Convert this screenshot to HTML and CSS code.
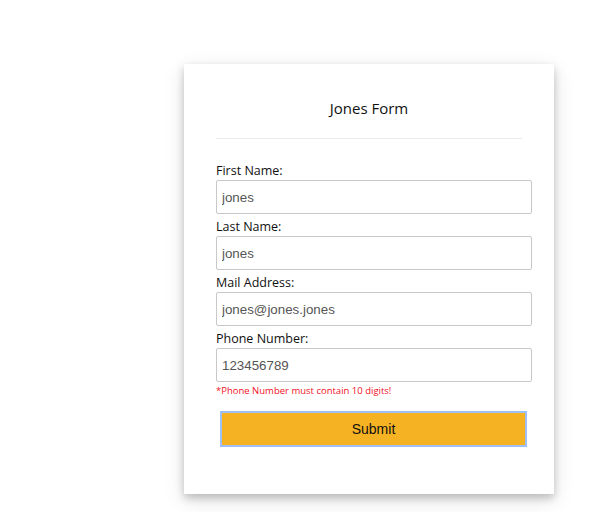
FILE: index.html
```
<!DOCTYPE html>
<html>
<head>
<meta charset="utf-8">
<link rel="stylesheet" href="styles.css">
</head>
<body>
<div class="card">
  <h2 class="title">Jones Form</h2>
  <hr class="rule">
  <form class="form">
    <div class="field">
      <label class="label">First Name:</label>
      <input class="input" type="text" value="jones">
    </div>
    <div class="field">
      <label class="label">Last Name:</label>
      <input class="input" type="text" value="jones">
    </div>
    <div class="field">
      <label class="label">Mail Address:</label>
      <input class="input" type="text" value="jones@jones.jones">
    </div>
    <div class="field">
      <label class="label">Phone Number:</label>
      <input class="input" type="text" value="123456789">
    </div>
    <div class="error">*Phone Number must contain 10 digits!</div>
    <button class="submit" type="button">Submit</button>
  </form>
</div>
</body>
</html>
```

FILE: styles.css
```
html, body {
  margin: 0;
  padding: 0;
  background: #ffffff;
}
body {
  font-family: "Open Sans", "Noto Sans", sans-serif;
  padding-bottom: 18px;
}
.card {
  box-sizing: border-box;
  width: 370px;
  height: 430px;
  margin: 64px 0 0 184px;
  padding: 0 32px;
  background: #fff;
  box-shadow: 0 4px 8px 0 rgba(0,0,0,0.2), 0 6px 20px 0 rgba(0,0,0,0.12);
  display: flow-root;
}
.title {
  margin: 33px 0 0;
  font-size: 15px;
  font-weight: 400;
  line-height: 22px;
  text-align: center;
  color: #111;
}
.rule {
  margin: 19px 0 0;
  border: 0;
  border-top: 1px solid #eaeaea;
  height: 0;
}
.form {
  margin: 23px 0 0;
}
.field {
  display: flex;
  flex-direction: column;
  margin-bottom: 4px;
}
.label {
  font-size: 12.5px;
  line-height: 18px;
  color: #111;
}
.input {
  box-sizing: border-box;
  width: 316px;
  height: 34px;
  margin: 0;
  padding: 0 5px;
  border: 1px solid #c8c8c8;
  border-radius: 2px;
  font-family: "Liberation Sans", Arial, sans-serif;
  font-size: 13.33px;
  color: #555;
  background: #fff;
}
.error {
  margin-top: -1px;
  font-size: 9.5px;
  line-height: 12px;
  color: #f0101e;
}
.submit {
  display: block;
  box-sizing: border-box;
  width: 307px;
  height: 36px;
  margin: 14px 0 0 4px;
  background: #f5b324;
  border: 2px solid #9ec0f5;
  border-radius: 0;
  font-family: "Liberation Sans", Arial, sans-serif;
  font-size: 14px;
  color: #111;
  padding: 0;
}
```
